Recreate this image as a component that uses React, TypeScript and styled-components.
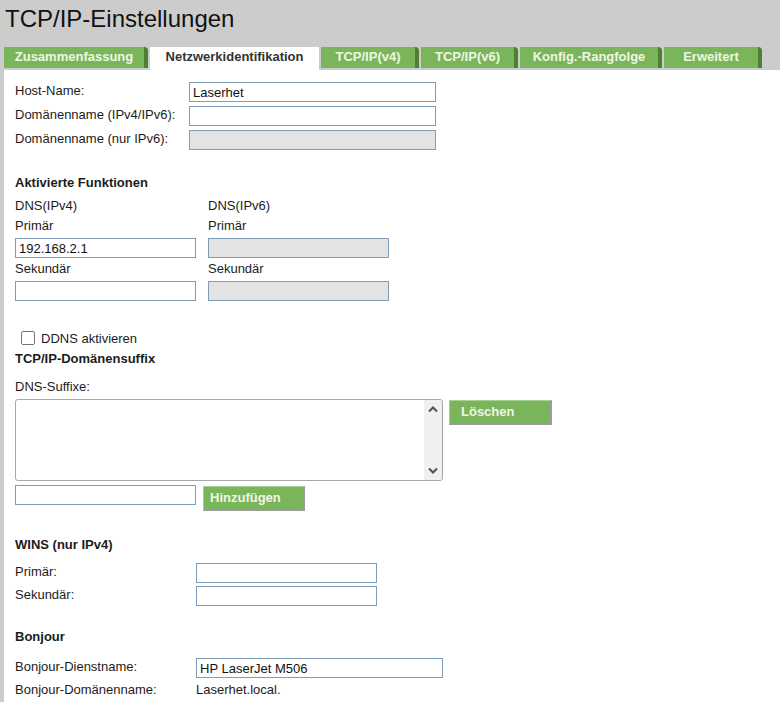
import * as React from "react";
import styled, { createGlobalStyle } from "styled-components";

const pageGray = "#cccccc";
const tabGreen = "#7ab55c";
const tabEdge = "#4f7f33";
const tabText = "#eef7e2";
const fieldBorder = "#7f9db9";
const textColor = "#1c1c1c";

const GlobalStyle = createGlobalStyle`
  body {
    margin: 0;
    background: ${pageGray};
    font-family: "Liberation Sans", Arial, sans-serif;
    color: ${textColor};
  }
`;

const Page = styled.div`
  padding-left: 4px;
  min-height: 702px;
  display: flex;
  flex-direction: column;
`;

const Title = styled.h1`
  margin: 0 0 9px 1px;
  height: 38px;
  line-height: 38px;
  font-size: 24px;
  font-weight: normal;
  color: #111;
`;

const TabBar = styled.div`
  display: flex;
  align-items: flex-start;
  gap: 2px;
  height: 23px;
`;

const Tab = styled.div<{ $width: number; $active?: boolean }>`
  box-sizing: border-box;
  width: ${(p) => p.$width}px;
  height: ${(p) => (p.$active ? 23 : 21)}px;
  line-height: 20px;
  text-align: center;
  font-size: 13px;
  font-weight: bold;
  white-space: nowrap;
  background: ${(p) => (p.$active ? "#fff" : tabGreen)};
  color: ${(p) => (p.$active ? "#333" : tabText)};
  border-right: ${(p) => (p.$active ? "none" : `4px solid ${tabEdge}`)};
  border-top-right-radius: ${(p) => (p.$active ? 0 : 4)}px;
`;

const Panel = styled.div`
  flex: 1;
  background: #fff;
  padding: 12px 0 20px 11px;
  font-size: 13px;
`;

const FieldRow = styled.div<{ $labelWidth: number; $gap?: number }>`
  display: grid;
  grid-template-columns: ${(p) => p.$labelWidth}px auto;
  align-items: start;
  height: 20px;
  margin-top: ${(p) => p.$gap ?? 4}px;
  &:first-child {
    margin-top: 0;
  }
`;

// labels sit a little above the middle of the field next to them
const Label = styled.span`
  font-size: 13px;
  line-height: 17px;
  white-space: nowrap;
`;

const TextInput = styled.input<{ $width: number }>`
  box-sizing: border-box;
  width: ${(p) => p.$width}px;
  height: 20px;
  margin: 0;
  padding: 0 3px;
  border: 1px solid ${fieldBorder};
  border-radius: 0;
  font-family: "Liberation Sans", Arial, sans-serif;
  font-size: 13px;
  color: #111;
  background: #fff;
  &:disabled {
    background: #e3e3e3;
  }
`;

const SectionHeading = styled.div<{ $top: number }>`
  margin-top: ${(p) => p.$top}px;
  font-size: 13px;
  font-weight: bold;
  line-height: 16px;
`;

const Caption = styled.div<{ $top?: number; $height?: number }>`
  margin-top: ${(p) => p.$top ?? 0}px;
  line-height: ${(p) => p.$height ?? 20}px;
  font-size: 13px;
`;

const DnsGrid = styled.div`
  display: grid;
  grid-template-columns: 193px 193px;
  margin-top: 5px;
`;

const DnsColumn = styled.div`
  display: flex;
  flex-direction: column;
`;

const Spaced = styled.div<{ $top: number }>`
  margin-top: ${(p) => p.$top}px;
  display: flex;
`;

const CheckRow = styled.label`
  display: flex;
  align-items: center;
  gap: 6px;
  height: 16px;
  margin-top: 29px;
  padding-left: 6px;
  font-size: 13px;
`;

const CheckBox = styled.span`
  box-sizing: border-box;
  width: 14px;
  height: 14px;
  border: 1px solid #767676;
  border-radius: 2px;
  background: #fff;
`;

const InlineRow = styled.div<{ $top: number; $gap: number }>`
  display: flex;
  align-items: flex-start;
  gap: ${(p) => p.$gap}px;
  margin-top: ${(p) => p.$top}px;
`;

const ListBox = styled.div`
  box-sizing: border-box;
  width: 428px;
  height: 82px;
  border: 1px solid #a7a7a7;
  border-radius: 3px;
  display: flex;
  overflow: hidden;
`;

const ListArea = styled.div`
  flex: 1;
`;

const ScrollTrack = styled.div`
  width: 18px;
  background: #f0f0f0;
  display: flex;
  flex-direction: column;
  justify-content: space-between;
  align-items: center;
  padding: 6px 0 6px;
`;

const ActionButton = styled.button<{ $width: number; $pad: number }>`
  box-sizing: border-box;
  width: ${(p) => p.$width}px;
  height: 25px;
  margin-top: 1px;
  padding: 0 0 1px ${(p) => p.$pad}px;
  text-align: left;
  background: ${tabGreen};
  color: ${tabText};
  font-family: "Liberation Sans", Arial, sans-serif;
  font-size: 13px;
  font-weight: bold;
  border: none;
  border-right: 2px solid #9c9c9c;
  border-bottom: 2px solid #9c9c9c;
  border-top: 1px solid #a9d191;
  border-left: 1px solid #a9d191;
`;

const Value = styled.span`
  font-size: 13px;
  line-height: 17px;
`;

const Chevron = ({ down }: { down?: boolean }) => (
  <svg width="10" height="7" viewBox="0 0 10 7">
    <polyline
      points={down ? "1,1.5 5,5.5 9,1.5" : "1,5.5 5,1.5 9,5.5"}
      fill="none"
      stroke="#505050"
      strokeWidth="2"
    />
  </svg>
);

const tabs = [
  { name: "Zusammenfassung", width: 144 },
  { name: "Netzwerkidentifikation", width: 169, active: true },
  { name: "TCP/IP(v4)", width: 98 },
  { name: "TCP/IP(v6)", width: 97 },
  { name: "Konfig.-Rangfolge", width: 142 },
  { name: "Erweitert", width: 98 },
];

export default function App() {
  return (
    <>
      <GlobalStyle />
      <Page>
        <Title>TCP/IP-Einstellungen</Title>
        <TabBar>
          {tabs.map((t) => (
            <Tab key={t.name} $width={t.width} $active={t.active}>
              {t.name}
            </Tab>
          ))}
        </TabBar>
        <Panel>
          <div>
            <FieldRow $labelWidth={174}>
              <Label>Host-Name:</Label>
              <TextInput $width={247} defaultValue="Laserhet" />
            </FieldRow>
            <FieldRow $labelWidth={174}>
              <Label>Domänenname (IPv4/IPv6):</Label>
              <TextInput $width={247} />
            </FieldRow>
            <FieldRow $labelWidth={174}>
              <Label>Domänenname (nur IPv6):</Label>
              <TextInput $width={247} disabled />
            </FieldRow>
          </div>

          <SectionHeading $top={25}>Aktivierte Funktionen</SectionHeading>
          <DnsGrid>
            <DnsColumn>
              <Caption>DNS(IPv4)</Caption>
              <Caption>Primär</Caption>
              <Spaced $top={2}>
                <TextInput $width={181} defaultValue="192.168.2.1" />
              </Spaced>
              <Caption $height={22}>Sekundär</Caption>
              <Spaced $top={1}>
                <TextInput $width={181} />
              </Spaced>
            </DnsColumn>
            <DnsColumn>
              <Caption>DNS(IPv6)</Caption>
              <Caption>Primär</Caption>
              <Spaced $top={2}>
                <TextInput $width={181} disabled />
              </Spaced>
              <Caption $height={22}>Sekundär</Caption>
              <Spaced $top={1}>
                <TextInput $width={181} disabled />
              </Spaced>
            </DnsColumn>
          </DnsGrid>

          <CheckRow>
            <CheckBox />
            DDNS aktivieren
          </CheckRow>
          <SectionHeading $top={5}>TCP/IP-Domänensuffix</SectionHeading>
          <Caption $top={12} $height={16}>
            DNS-Suffixe:
          </Caption>
          <InlineRow $top={4} $gap={6}>
            <ListBox>
              <ListArea />
              <ScrollTrack>
                <Chevron />
                <Chevron down />
              </ScrollTrack>
            </ListBox>
            <ActionButton $width={103} $pad={11}>
              Löschen
            </ActionButton>
          </InlineRow>
          <InlineRow $top={4} $gap={7}>
            <TextInput $width={181} />
            <ActionButton $width={102} $pad={6}>
              Hinzufügen
            </ActionButton>
          </InlineRow>

          <SectionHeading $top={26}>WINS (nur IPv4)</SectionHeading>
          <div style={{ marginTop: 10 }}>
            <FieldRow $labelWidth={181}>
              <Label>Primär:</Label>
              <TextInput $width={181} />
            </FieldRow>
            <FieldRow $labelWidth={181} $gap={3}>
              <Label>Sekundär:</Label>
              <TextInput $width={181} />
            </FieldRow>
          </div>

          <SectionHeading $top={23}>Bonjour</SectionHeading>
          <div style={{ marginTop: 13 }}>
            <FieldRow $labelWidth={181}>
              <Label>Bonjour-Dienstname:</Label>
              <TextInput $width={247} defaultValue="HP LaserJet M506" />
            </FieldRow>
            <FieldRow $labelWidth={181} $gap={3}>
              <Label>Bonjour-Domänenname:</Label>
              <Value>Laserhet.local.</Value>
            </FieldRow>
          </div>
        </Panel>
      </Page>
    </>
  );
}
